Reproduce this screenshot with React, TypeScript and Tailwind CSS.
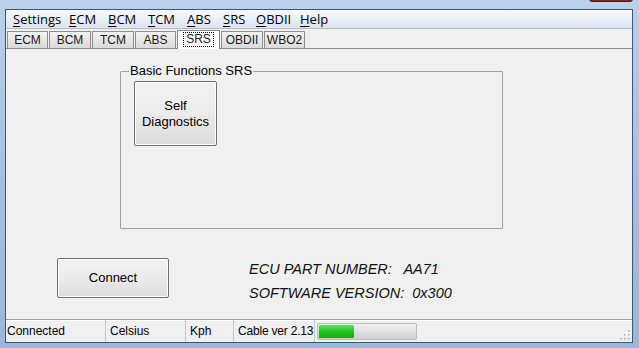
import React from "react";

const menus = [
  { k: "S", rest: "ettings", w: "w-[56px]" },
  { k: "E", rest: "CM", w: "w-[39px]" },
  { k: "B", rest: "CM", w: "w-[40px]" },
  { k: "T", rest: "CM", w: "w-[39px]" },
  { k: "A", rest: "BS", w: "w-[36px]" },
  { k: "S", rest: "RS", w: "w-[33px]" },
  { k: "O", rest: "BDII", w: "w-[44px]" },
  { k: "H", rest: "elp", w: "w-[40px]" },
];

const tabs = [
  { label: "ECM", w: "w-[41px]" },
  { label: "BCM", w: "w-[42px]" },
  { label: "TCM", w: "w-[42px]" },
  { label: "ABS", w: "w-[41px]" },
  { label: "SRS", w: "w-[43px]", active: true },
  { label: "OBDII", w: "w-[42px]" },
  { label: "WBO2", w: "w-[41px]" },
];

const winBtn =
  "bg-gradient-to-b from-[#f2f2f2] via-[#ebebeb] to-[#dcdcdc] border border-[#707070] rounded-[2px] shadow-[inset_0_0_0_1px_#fcfcfc] text-[13px] text-black";

export default function App() {
  return (
    <div
      className="w-[639px] h-[348px] bg-gradient-to-b from-[#b9d1ea] via-[#a3c0e3] to-[#9ab8dd] pt-[9px] pl-[5px] pr-[6px] pb-[5px] flex flex-col relative overflow-hidden"
      style={{ fontFamily: '"Liberation Sans", Arial, sans-serif' }}
    >
      {/* close button sliver */}
      <div className="absolute right-[6px] top-[-4px] w-[44px] h-[6px] rounded-b-[3px] bg-[#7a2b24] border border-[#4a1a16]" />

      <div className="flex-1 flex flex-col border border-[#425670] bg-[#f0f0f0]">
        {/* menu bar */}
        <div
          className="h-[19px] flex items-center pl-[7px] bg-gradient-to-b from-[#f6f8fc] via-[#eaeff8] to-[#dbe3f1] border-b border-[#b6bcc6] text-[13px] text-black"
          style={{ fontFamily: '"Open Sans", "Noto Sans", sans-serif' }}
        >
          {menus.map((m, i) => (
            <span key={i} className={`${m.w} shrink-0 leading-none whitespace-nowrap`}>
              <span className="underline underline-offset-2">{m.k}</span>
              {m.rest}
            </span>
          ))}
        </div>

        {/* tab row */}
        <div className="h-[20px] flex items-end gap-[1px] pl-[1px] border-b border-[#8a8a8a] text-[12px] text-[#1a1a1a]">
          {tabs.map((t) =>
            t.active ? (
              <div
                key={t.label}
                className={`${t.w} h-[19px] -mb-[1px] bg-white border border-b-0 border-[#8a8a8a] flex items-start justify-center pt-[1px]`}
              >
                <span className="px-[2px] leading-[13px] border border-dotted border-black">{t.label}</span>
              </div>
            ) : (
              <div
                key={t.label}
                className={`${t.w} h-[17px] bg-gradient-to-b from-[#f2f2f2] to-[#dadada] border border-b-0 border-[#8e8e8e] flex items-center justify-center leading-none`}
              >
                {t.label}
              </div>
            )
          )}
        </div>

        {/* content */}
        <div className="flex-1 flex flex-col">
          <div className="pl-[114px] pt-[15px]">
            <fieldset className="w-[383px] h-[165px] border border-[#a0a0a0] rounded-[1px] px-[13px] pt-[0px] m-0">
              <legend className="text-[13px] leading-[14px] px-[1px] -ml-[5px] text-black">Basic Functions SRS</legend>
              <button className={`${winBtn} w-[83px] h-[65px] mt-[3px] leading-[16px] flex flex-col items-center justify-center`}>
                <span>Self</span>
                <span>Diagnostics</span>
              </button>
            </fieldset>
          </div>

          <div className="flex items-start pl-[51px] pt-[29px]">
            <button className={`${winBtn} w-[112px] h-[40px]`}>Connect</button>
            <div className="ml-[80px] mt-[-1px] italic text-[14.5px] leading-[24px] text-[#111]">
              <div>
                ECU PART NUMBER:&nbsp;&nbsp; AA71
              </div>
              <div>
                SOFTWARE VERSION:&nbsp; 0x300
              </div>
            </div>
          </div>
        </div>

        {/* status bar */}
        <div className="h-[23px] border-t border-[#a0a0a0] shadow-[inset_0_1px_0_#ffffff] bg-[#f0f0f0] flex items-center text-[12px] text-black relative whitespace-nowrap">
          <div className="w-[100px] pl-[1px] h-full flex items-center border-r border-[#c8c8c8]">Connected</div>
          <div className="w-[80px] pl-[4px] h-full flex items-center border-r border-[#c8c8c8]">Celsius</div>
          <div className="w-[48px] pl-[4px] h-full flex items-center border-r border-[#c8c8c8]">Kph</div>
          <div className="w-[81px] pl-[4px] h-full flex items-center border-r border-[#c8c8c8] tracking-[-0.2px]">Cable ver 2.13</div>
          <div className="ml-[2px] w-[100px] h-[17px] border border-[#bcbcbc] rounded-[2px] bg-gradient-to-b from-[#f2f2f2] via-[#e0e0e0] to-[#cfcfcf] p-[1px]">
            <div className="h-full w-[36%] rounded-[1px] bg-gradient-to-b from-[#5ce35c] via-[#21c421] to-[#19a719]" />
          </div>
          {/* size grip */}
          <svg className="absolute right-[2px] bottom-[2px]" width="11" height="11" viewBox="0 0 11 11">
            {[
              [9, 1],
              [9, 5],
              [5, 5],
              [9, 9],
              [5, 9],
              [1, 9],
            ].map(([x, y], i) => (
              <rect key={i} x={x} y={y} width="1.5" height="1.5" fill="#a8a8a8" />
            ))}
          </svg>
        </div>
      </div>
    </div>
  );
}
